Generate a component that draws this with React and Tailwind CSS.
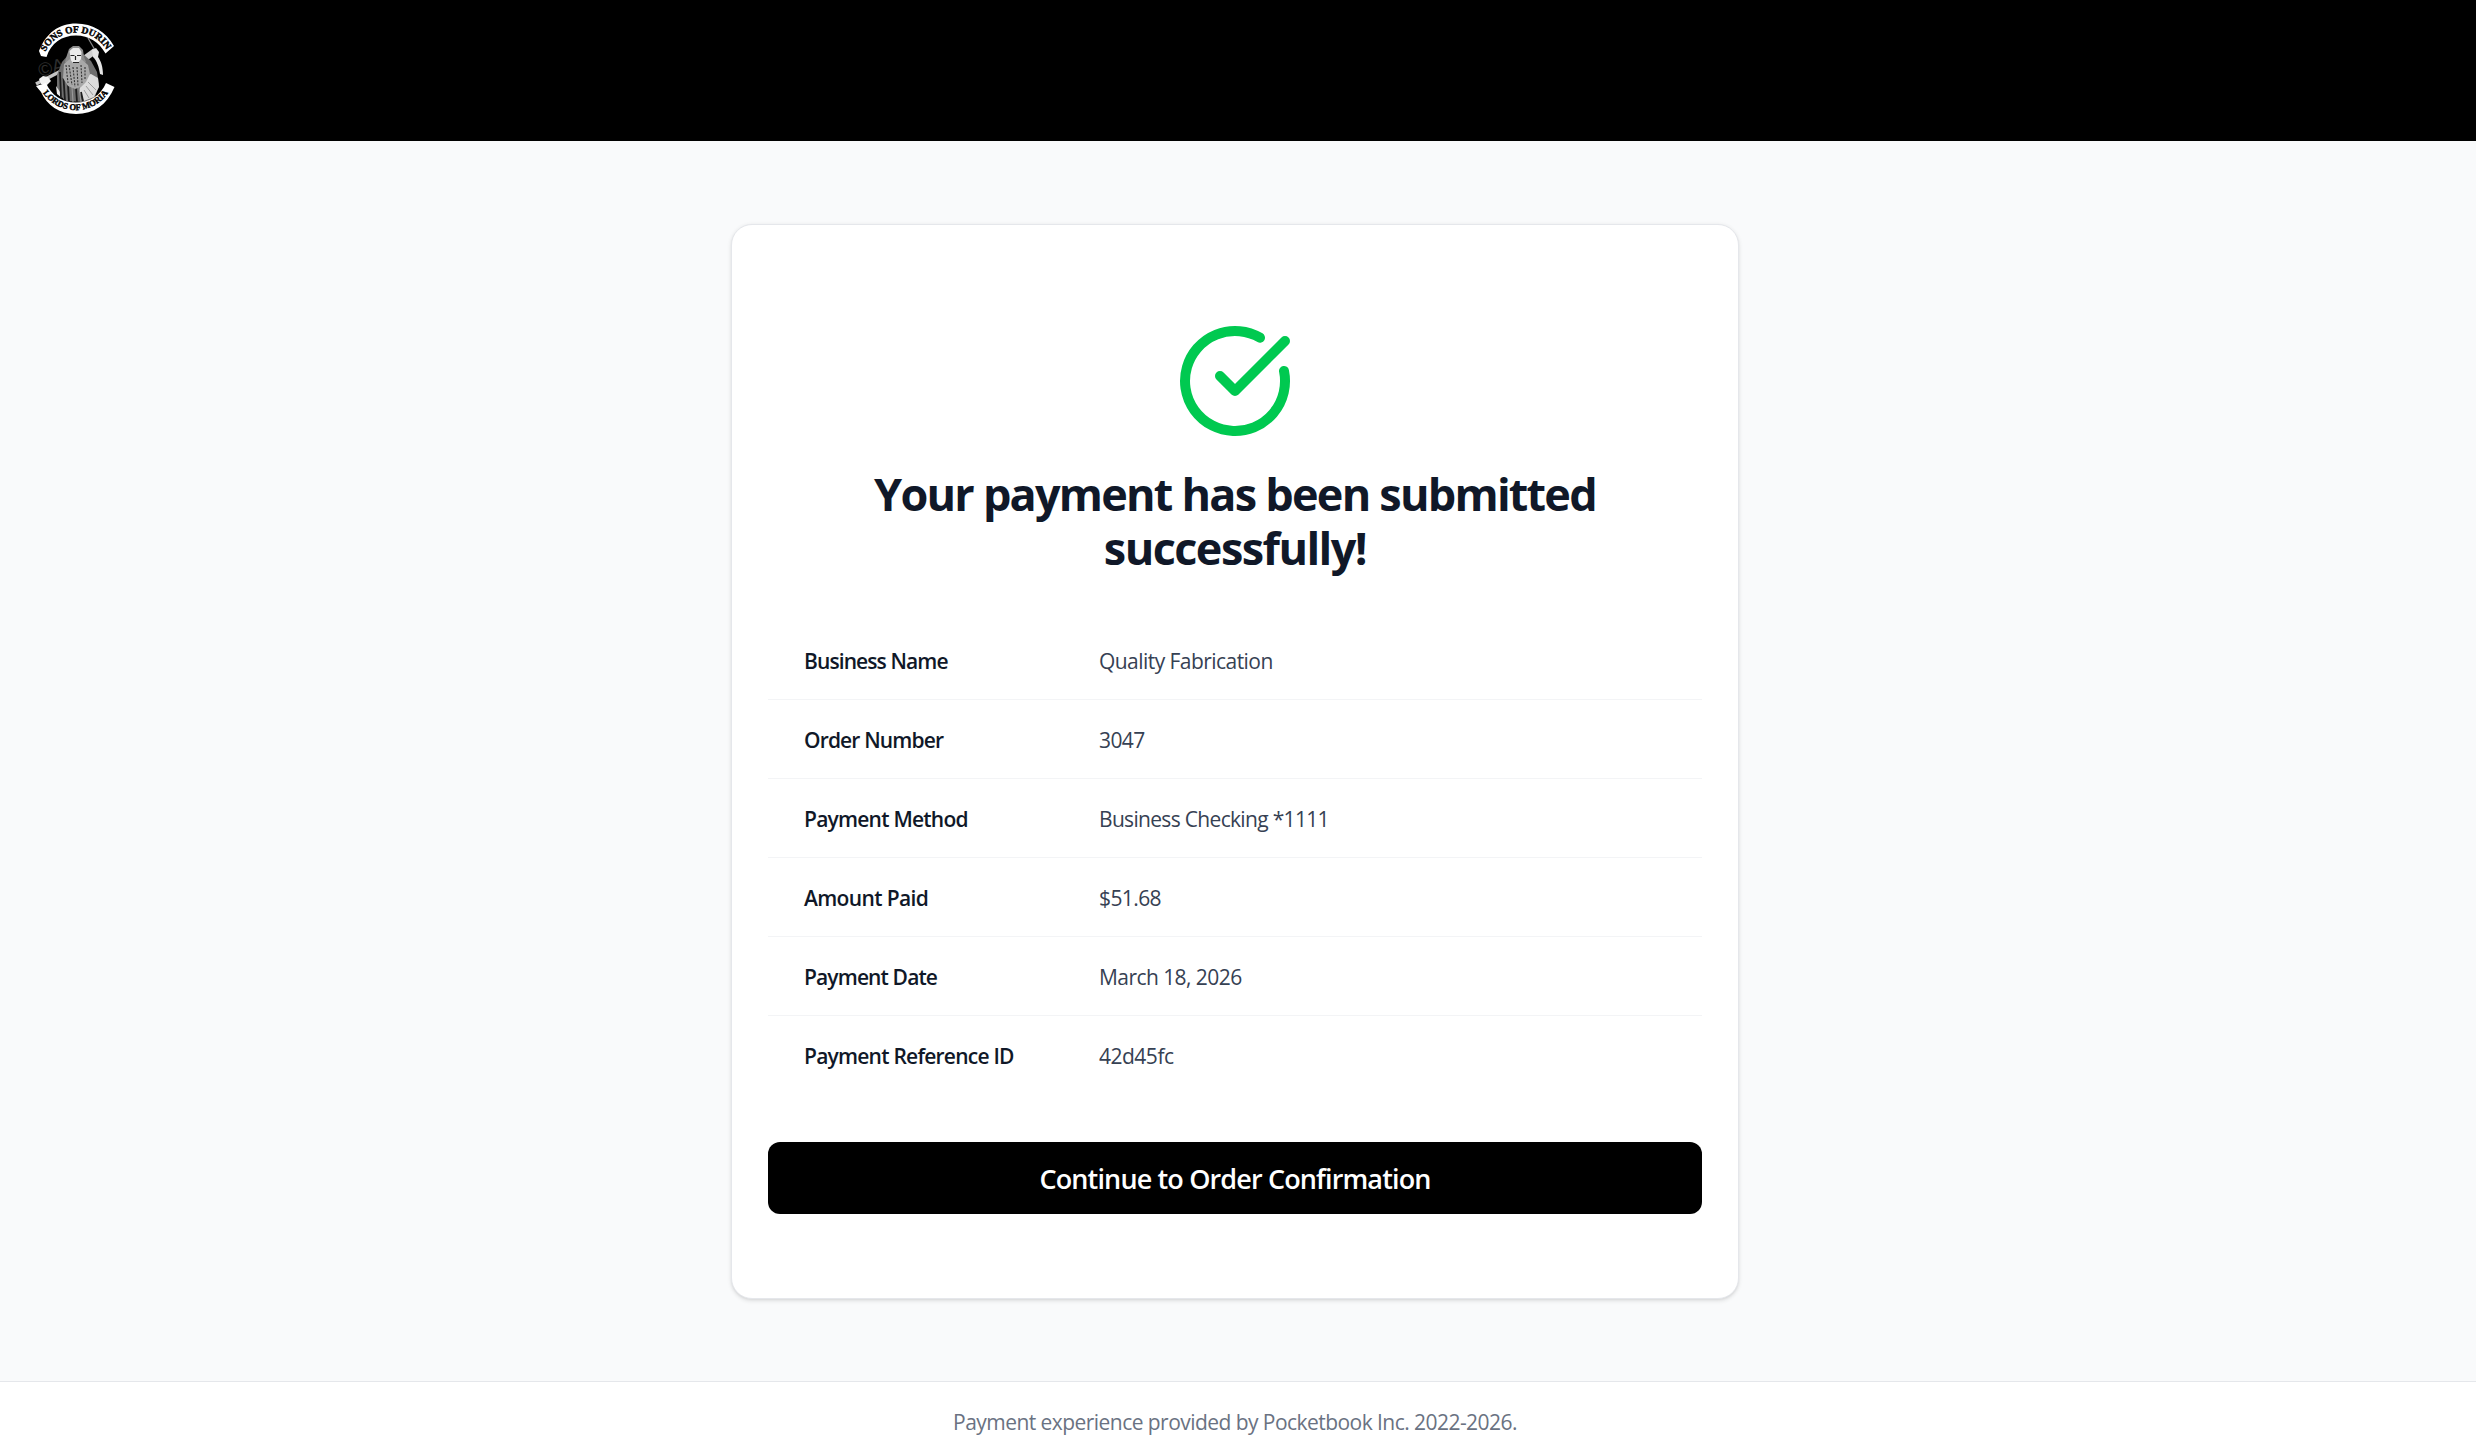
import { CircleCheckBig } from "lucide-react";

const details = [
  { label: "Business Name", value: "Quality Fabrication", labelClass: "tracking-[-0.9px]", valueClass: "tracking-[-0.55px]" },
  { label: "Order Number", value: "3047", labelClass: "tracking-[-0.85px]", valueClass: "tracking-[-0.6px]" },
  { label: "Payment Method", value: "Business Checking *1111", labelClass: "tracking-[-0.77px]", valueClass: "tracking-[-0.68px]" },
  { label: "Amount Paid", value: "$51.68", labelClass: "tracking-[-0.65px]", valueClass: "tracking-[-0.6px]" },
  { label: "Payment Date", value: "March 18, 2026", labelClass: "tracking-[-0.87px]", valueClass: "tracking-[-0.56px]" },
  { label: "Payment Reference ID", value: "42d45fc", labelClass: "tracking-[-0.77px]", valueClass: "tracking-[-0.5px]" },
];

function Logo() {
  return (
    <svg viewBox="0 0 180 141" className="h-[141px] w-[180px]" role="img" aria-label="Sons of Durin">
      <defs>
        <path id="top-arc" d="M43 58A34.500 34.500 0 0 1 109 56" />
        <path id="bottom-arc" d="M40 88A39.600 39.600 0 0 0 111 88" />
      </defs>

      <text x="40" y="77" fontSize="19" fill="#2e2e2e" fontFamily="Liberation Sans, sans-serif" transform="rotate(-14 40 77)">
        ©A
      </text>

      {/* axe and pickaxe */}
      <path d="M36 84 61 71" stroke="#c4c4c4" strokeWidth="3.500" />
      <path d="M39 79 43 76 48 77 51 81 47 85 41 84Z" fill="#f2f2f2" />
      <path d="M88 38 95 50" stroke="#8c8c8c" strokeWidth="1.200" />
      <path d="M84 59 95 51" stroke="#d0d0d0" strokeWidth="6" />
      <path d="M92 50 96 48 99 52 98 57C101 61 103 67 103 75L100 74C99 67 97 61 93 57Z" fill="#e4e4e4" />

      {/* cloak and sleeve */}
      <path d="M62 62 69 54 83 54 91 61 97 72 99 85 95 97 86 102 65 101 57 91 57 75Z" fill="#6e6e6e" />
      <path d="M84 76 91 74 98 78 99 87 94 97 84 101 79 91Z" fill="#dcdcdc" />
      <path d="M56 86 60 92 62 98 57 94Z" fill="#ededed" />
      <path d="M60 72 61 98M63.500 78 65 101M68 85 69 102M76 88 77 102M81 92 83 101" stroke="#1c1c1c" strokeWidth="1.800" />
      <path d="M72 87 73 102M79 88 81 102M86 86 93 95M84 90 89 98M88 82 96 90" stroke="#9c9c9c" strokeWidth="1" />

      {/* head and beard */}
      <path d="M67 55 69 49 73 46 79 46 83 50 84 57 86 62 81 66 70 66 65 62Z" fill="#8d8d8d" />
      <path d="M69.500 51 73 48 79 48 81.500 52 81 61 76 65 71 62Z" fill="#eaeaea" />
      <path d="M64 64 70 59 73 63 78 63 81 59 88 65 90 74 86 82 81 87 75 89 68 86 63 78Z" fill="#a8a8a8" />
      <path
        d="M66 65 68 83M69 65 72 85M73 67 75 87M77 67 78 86M81 65 82 83M85 67 85 79"
        stroke="#333"
        strokeWidth="1.100"
        strokeDasharray="2 1.300"
      />
      <path d="M70.500 55.500H74.500M77 55.500H81M75.500 56V60M73 62.500H79" stroke="#222" strokeWidth="1.200" />

      {/* banners */}
      <path d="M39 51C46 33 59 23.500 76 23.500C93 23.500 106 32 114 46L105.500 53.500C99 42 89 35.500 76 35.500C62 35.500 51 43 46.500 57L41 56Z" fill="#fff" />
      <path d="M36 86 46 83C51 95 62 102.500 76 102.500C90 102.500 101 95 106 83L114.500 87C107 105 94 114 76 114C59 114 47 105 41 92Z" fill="#fff" />
      <g fill="#000" stroke="#000" strokeWidth="0.400" fontWeight="700" textAnchor="middle" fontFamily="Liberation Serif, serif">
        <text fontSize="9.600">
          <textPath href="#top-arc" startOffset="50%">SONS OF DURIN</textPath>
        </text>
        <text fontSize="8.600">
          <textPath href="#bottom-arc" startOffset="50%">LORDS OF MORIA</textPath>
        </text>
      </g>
    </svg>
  );
}

export default function App() {
  return (
    <div className="flex min-h-screen flex-col bg-[#f9fafb] font-['Open_Sans','Noto_Sans',sans-serif]">
      <header className="h-[141px] bg-black">
        <Logo />
      </header>

      <main className="flex flex-1 justify-center pt-[83px] pr-[6px]">
        <section className="h-[1075px] w-[1008px] rounded-[21px] border border-[#e5e7eb] bg-white px-9 pt-24 shadow-[0_1.5px_4.5px_rgba(0,0,0,0.1),0_1.5px_3px_-1.5px_rgba(0,0,0,0.1)]">
          <div className="flex flex-col items-center">
            <CircleCheckBig className="size-[120px] text-[#00c950]" strokeWidth={2} />
            <h1 className="mt-[26px] text-center text-[45px] leading-[54px] font-bold text-[#101828]">
              <span className="block tracking-[-1.77px]">Your payment has been submitted</span>
              <span className="block tracking-[-1.55px]">successfully!</span>
            </h1>
          </div>

          <dl className="mt-[46px]">
            {details.map((item) => (
              <div
                key={item.label}
                className="flex h-[79px] items-center border-b border-[#f3f4f6] px-9 pt-[3px] text-[21px] last:border-transparent"
              >
                <dt className={`w-[295px] font-semibold text-[#101828] ${item.labelClass}`}>{item.label}</dt>
                <dd className={`text-[#364153] ${item.valueClass}`}>{item.value}</dd>
              </div>
            ))}
          </dl>

          <button
            type="button"
            className="mt-[47px] flex h-[72px] w-full items-center justify-center rounded-xl bg-black pt-[2px] text-[27px] font-semibold tracking-[-0.86px] text-white"
          >
            Continue to Order Confirmation
          </button>
        </section>
      </main>

      <footer className="h-[68px] border-t border-[#e5e7eb] bg-white pt-[25px] pr-[6px] text-center text-[21px] leading-[30px] tracking-[-0.55px] text-[#6a7282]">
        Payment experience provided by Pocketbook Inc. 2022-2026.
      </footer>
    </div>
  );
}
